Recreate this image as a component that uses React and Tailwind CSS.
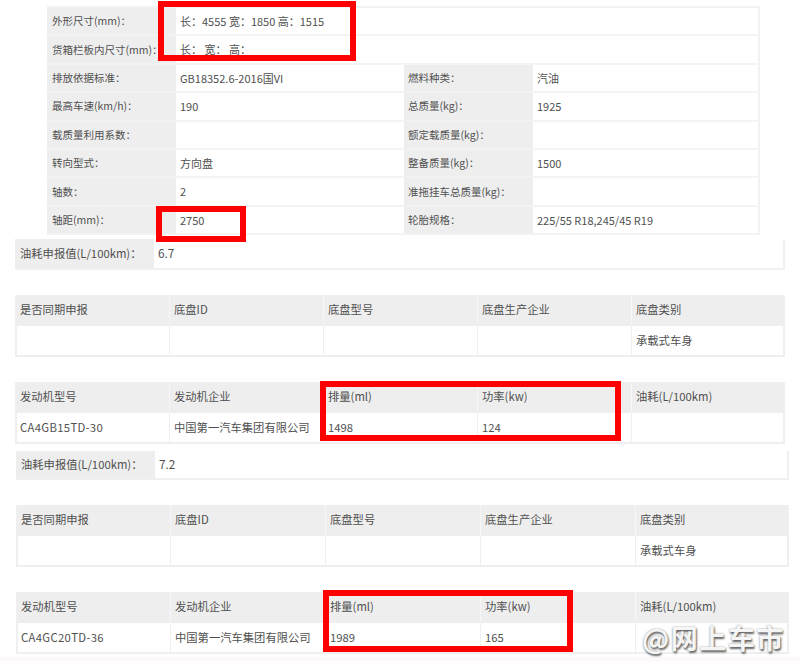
const font = "font-['Noto_Sans_CJK_SC','Noto_Sans',sans-serif]";

function SpecRow({ label, value, label2, value2 }) {
  return (
    <tr className="h-[28.4px]">
      <td className="bg-[#eeeeee] pl-[5px] border-b-2 border-[#f2f2f2] whitespace-nowrap">{label}</td>
      {label2 === undefined ? (
        <td colSpan={3} className="pl-[4px] text-[11px] border-b-2 border-[#f4f4f4]">{value}</td>
      ) : (
        <>
          <td className="pl-[4px] text-[11px] border-b-2 border-[#f4f4f4]">{value}</td>
          <td className="bg-[#eeeeee] pl-[4px] border-b-2 border-[#f2f2f2] whitespace-nowrap">{label2}</td>
          <td className="pl-[4px] text-[11px] border-b-2 border-[#f4f4f4]">{value2}</td>
        </>
      )}
    </tr>
  );
}

function FuelRow({ label, value, className }) {
  return (
    <div className={"flex border-b-2 border-r-2 border-[#f0f0f0] text-[11.3px] " + className}>
      <div className="w-[139px] bg-[#eeeeee] flex items-center pl-[5px] pb-[1px]">{label}</div>
      <div className="flex items-center pl-[4px] pb-[1px] text-[11.8px]">{value}</div>
    </div>
  );
}

// five column table used for chassis and engine blocks
function GridTable({ head, row, cols, className }) {
  return (
    <div className={"border-l-2 border-r-2 border-b-2 border-[#efefef] text-[11.3px] " + className}>
      <div className={"grid h-[31px] bg-[#eeeeee] " + cols}>
        {head.map((h, i) => (
          <div key={i} className="flex items-center pl-[4px] pb-[2px] border-l border-[#f6f6f6] first:border-l-0 first:pl-[3px]">{h}</div>
        ))}
      </div>
      <div className={"grid h-[29px] " + cols}>
        {row.map((c, i) => (
          <div key={i} className="flex items-center pl-[4px] border-l border-[#efefef] first:border-l-0 first:pl-[3px] whitespace-nowrap">{c}</div>
        ))}
      </div>
    </div>
  );
}

function RedBox({ className }) {
  return <div className={"absolute border-[6px] border-[#ff0000] " + className}></div>;
}

const chassisHead = ["是否同期申报", "底盘ID", "底盘型号", "底盘生产企业", "底盘类别"];
const chassisRow = ["", "", "", "", "承载式车身"];
const engineHead = ["发动机型号", "发动机企业", "排量(ml)", "功率(kw)", "油耗(L/100km)"];
const colsA = "grid-cols-[152px_154px_154px_154px_1fr]";
const colsB = "grid-cols-[152px_155px_155px_155px_1fr]";

function Model({ children }) {
  return <span className="tracking-[0.33px]">{children}</span>;
}

export default function App() {
  return (
    <div className={"relative w-[800px] h-[661px] overflow-hidden bg-white text-[#505050] pt-[6px] " + font}>
      <table className="ml-[47px] w-[713px] table-fixed border-collapse border-t-2 border-r-2 border-[#f2f2f2] text-[10.5px]">
        <colgroup>
          <col className="w-[129px]" />
          <col className="w-[228px]" />
          <col className="w-[129px]" />
          <col />
        </colgroup>
        <tbody>
          <SpecRow label="外形尺寸(mm)：" value="长：4555 宽：1850 高：1515" />
          <SpecRow label="货箱栏板内尺寸(mm)：" value="长：  宽：  高：" />
          <SpecRow label="排放依据标准：" value="GB18352.6-2016国VI" label2="燃料种类：" value2="汽油" />
          <SpecRow label="最高车速(km/h)：" value="190" label2="总质量(kg)：" value2="1925" />
          <SpecRow label="载质量利用系数：" value="" label2="额定载质量(kg)：" value2="" />
          <SpecRow label="转向型式：" value="方向盘" label2="整备质量(kg)：" value2="1500" />
          <SpecRow label="轴数：" value="2" label2="准拖挂车总质量(kg)：" value2="" />
          <SpecRow label="轴距(mm)：" value="2750" label2="轮胎规格：" value2="225/55 R18,245/45 R19" />
        </tbody>
      </table>

      <FuelRow className="ml-[15px] w-[770px] h-[31px] mt-[4px]" label="油耗申报值(L/100km)：" value="6.7" />
      <GridTable className="ml-[15px] w-[770px] mt-[25px]" cols={colsA} head={chassisHead} row={chassisRow} />
      <GridTable className="ml-[15px] w-[770px] mt-[25px]" cols={colsA} head={engineHead} row={[<Model>CA4GB15TD-30</Model>, "中国第一汽车集团有限公司", "1498", "124", ""]} />

      <FuelRow className="ml-[16px] w-[773px] h-[29px] mt-[7px]" label="油耗申报值(L/100km)：" value="7.2" />
      <GridTable className="ml-[16px] w-[773px] mt-[25px]" cols={colsB} head={chassisHead} row={chassisRow} />
      <GridTable className="ml-[16px] w-[773px] mt-[25px]" cols={colsB} head={engineHead} row={[<Model>CA4GC20TD-36</Model>, "中国第一汽车集团有限公司", "1989", "165", ""]} />
      <div className="h-[9px] mt-[3px] bg-[#fff8fa]"></div>

      <RedBox className="left-[158px] top-[1px] w-[198px] h-[60px]" />
      <RedBox className="left-[156px] top-[206px] w-[90px] h-[36px]" />
      <RedBox className="left-[320px] top-[381px] w-[301px] h-[60px]" />
      <RedBox className="left-[323px] top-[590px] w-[250px] h-[62px]" />

      <div className="absolute left-[642px] top-[620px] text-[27px] leading-[36px] font-bold tracking-[1.5px] whitespace-nowrap text-[#f5f5f5] [text-shadow:1px_2px_2px_#666,0_0_2px_#999]">
        @网上车市
      </div>
    </div>
  );
}
